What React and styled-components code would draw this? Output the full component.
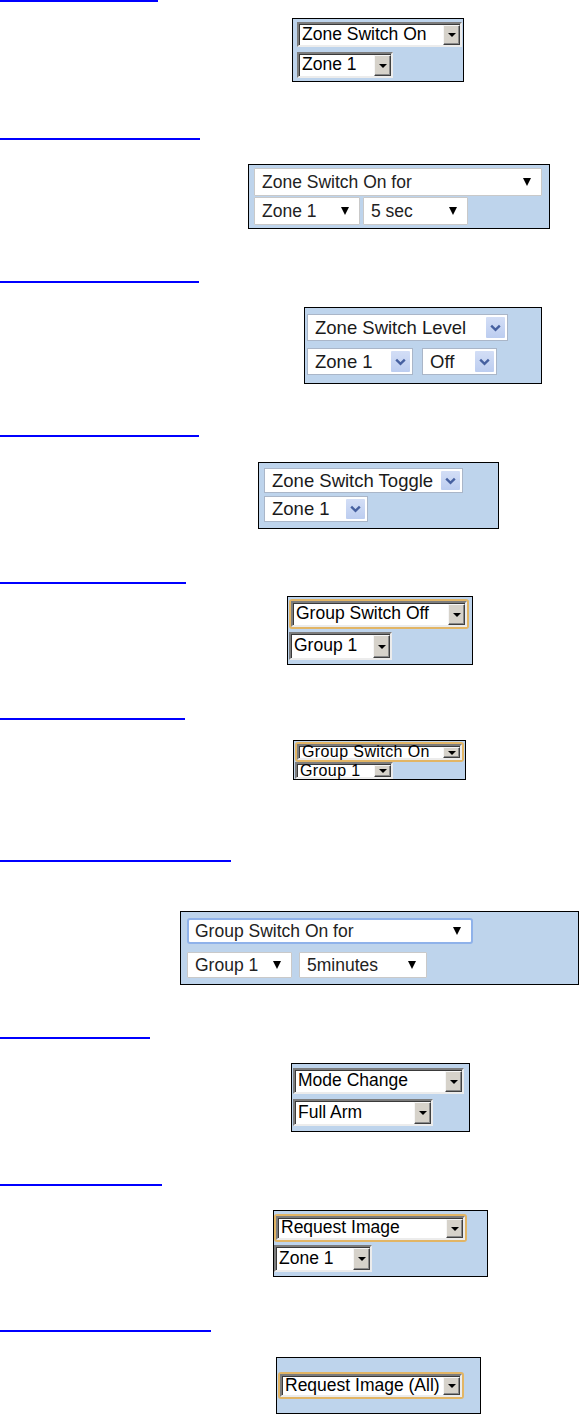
import React from 'react';
import styled, { createGlobalStyle } from 'styled-components';

const GlobalStyle = createGlobalStyle`
  html, body {
    margin: 0;
    padding: 0;
    background: #fff;
  }
  body {
    font-family: "Liberation Sans", Arial, sans-serif;
    width: 579px;
    height: 1414px;
    overflow: hidden;
  }
`;

const sections = [
  {
    rule: 158, ruleY: 0, top: 18, left: 292, w: 172, h: 64, pad: '3px 0 0 4px', gap: 5, kind: 'classic',
    rows: [[{ t: 'Zone Switch On', w: 165, h: 25 }], [{ t: 'Zone 1', w: 96, h: 26 }]],
  },
  {
    rule: 200, ruleY: 138, top: 164, left: 248, w: 302, h: 65, pad: '3px 0 0 5px', gap: 1, colGap: 3, kind: 'flat',
    rows: [[{ t: 'Zone Switch On for', w: 288, h: 28 }], [{ t: 'Zone 1', w: 106, h: 28 }, { t: '5 sec', w: 105, h: 28 }]],
  },
  {
    rule: 199, ruleY: 281, top: 307, left: 304, w: 238, h: 77, pad: '6px 0 0 2px', gap: 7, colGap: 9, kind: 'xp',
    rows: [[{ t: 'Zone Switch Level', w: 201, h: 27 }], [{ t: 'Zone 1', w: 106, h: 27 }, { t: 'Off', w: 75, h: 27 }]],
  },
  {
    rule: 199, ruleY: 435, top: 462, left: 258, w: 241, h: 67, pad: '5px 0 0 5px', gap: 3, kind: 'xp',
    rows: [[{ t: 'Zone Switch Toggle', w: 199, h: 25 }], [{ t: 'Zone 1', w: 104, h: 26 }]],
  },
  {
    rule: 186, ruleY: 582, top: 596, left: 287, w: 186, h: 69, pad: '2px 0 0 1px', gap: 3, kind: 'classic',
    rows: [[{ t: 'Group Switch Off', w: 180, h: 30, ring: 'gold' }], [{ t: 'Group 1', w: 103, h: 28 }]],
  },
  {
    rule: 185, ruleY: 718, top: 740, left: 293, w: 173, h: 40, pad: '1px 0 0 1px', gap: 0, kind: 'classic',
    size: 16, spacing: 0.4,
    rows: [[{ t: 'Group Switch On', w: 169, h: 20, ring: 'gold' }], [{ t: 'Group 1', w: 98, h: 17 }]],
  },
  {
    rule: 231, ruleY: 860, top: 911, left: 180, w: 399, h: 74, pad: '6px 0 0 6px', gap: 8, colGap: 7, kind: 'flat',
    rows: [[{ t: 'Group Switch On for', w: 286, h: 26, ring: 'blue' }], [{ t: 'Group 1', w: 105, h: 26 }, { t: '5minutes', w: 128, h: 26 }]],
  },
  {
    rule: 150, ruleY: 1037, top: 1063, left: 291, w: 179, h: 69, pad: '4px 0 0 1px', gap: 5, kind: 'classic',
    rows: [[{ t: 'Mode Change', w: 171, h: 26 }], [{ t: 'Full Arm', w: 140, h: 27 }]],
  },
  {
    rule: 162, ruleY: 1184, top: 1210, left: 273, w: 215, h: 67, pad: '3px 0 0 0', gap: 3, kind: 'classic',
    rows: [[{ t: 'Request Image', w: 193, h: 28, ring: 'gold' }], [{ t: 'Zone 1', w: 98, h: 27 }]],
  },
  {
    rule: 211, ruleY: 1330, top: 1357, left: 276, w: 205, h: 57, pad: '14px 0 0 1px', gap: 0, kind: 'classic',
    rows: [[{ t: 'Request Image (All)', w: 186, h: 27, ring: 'gold' }]],
  },
];

const ClassicSelect = ({ text, w, h, size, spacing }) => (
  <ClassicField $w={w} $h={h}>
    <ClassicText $size={size} $spacing={spacing}>{text}</ClassicText>
    <ClassicButton>
      <Triangle />
    </ClassicButton>
  </ClassicField>
);

const FlatSelect = ({ text, w, h, focused }) => (
  <FlatField $w={w} $h={h} $focused={focused}>
    <FlatText>{text}</FlatText>
    <FlatArrow />
  </FlatField>
);

const XpSelect = ({ text, w, h }) => (
  <XpField $w={w} $h={h}>
    <XpText>{text}</XpText>
    <XpButton>
      <svg width='11' height='8' viewBox='0 0 11 8'>
        <path d='M1.2 1.6 L5.5 5.8 L9.8 1.6' fill='none' stroke='#4660a0' strokeWidth='2.4' />
      </svg>
    </XpButton>
  </XpField>
);

const Select = ({ kind, item, size, spacing }) => {
  if (kind === 'flat') {
    return <FlatSelect text={item.t} w={item.w} h={item.h} focused={item.ring === 'blue'} />;
  }
  if (kind === 'xp') {
    return <XpSelect text={item.t} w={item.w} h={item.h} />;
  }
  if (item.ring === 'gold') {
    return (
      <GoldRing $w={item.w} $h={item.h}>
        <ClassicSelect text={item.t} w={item.w - 4} h={item.h - 4} size={size} spacing={spacing} />
      </GoldRing>
    );
  }
  return <ClassicSelect text={item.t} w={item.w} h={item.h} size={size} spacing={spacing} />;
};

const App = () => {
  let prevBottom = 0;
  return (
    <Page>
      <GlobalStyle />
      {sections.map((s, i) => {
        const ruleTop = s.ruleY - prevBottom;
        const panelTop = s.top - (s.ruleY + 2);
        prevBottom = s.top + s.h;
        return (
          <Section key={i}>
            <Rule href='#' $w={s.rule} $mt={ruleTop} />
            <Panel $w={s.w} $h={s.h} $mt={panelTop} $left={s.left} $pad={s.pad} $gap={s.gap}>
              {s.rows.map((row, r) => (
                <Row key={r} $gap={s.colGap || 0}>
                  {row.map((item, k) => (
                    <Select key={k} kind={s.kind} item={item} size={s.size} spacing={s.spacing} />
                  ))}
                </Row>
              ))}
            </Panel>
          </Section>
        );
      })}
    </Page>
  );
};

export default App;

const Page = styled.div`
  width: 579px;
  display: flex;
  flex-direction: column;
`;

const Section = styled.section`
  display: flex;
  flex-direction: column;
`;

const Rule = styled.a`
  display: block;
  width: ${(p) => p.$w}px;
  height: 2px;
  margin-top: ${(p) => p.$mt}px;
  background: #0000ff;
`;

const Panel = styled.div`
  box-sizing: border-box;
  width: ${(p) => p.$w}px;
  height: ${(p) => p.$h}px;
  margin: ${(p) => p.$mt}px 0 0 ${(p) => p.$left}px;
  padding: ${(p) => p.$pad};
  background: #bed4ec;
  border: 1px solid #000;
  display: flex;
  flex-direction: column;
  gap: ${(p) => p.$gap}px;
`;

const Row = styled.div`
  display: flex;
  gap: ${(p) => p.$gap}px;
`;

const GoldRing = styled.div`
  box-sizing: border-box;
  width: ${(p) => p.$w}px;
  height: ${(p) => p.$h}px;
  border: 2px solid #e2b565;
  border-radius: 3px;
`;

const ClassicField = styled.div`
  box-sizing: border-box;
  display: flex;
  width: ${(p) => p.$w}px;
  height: ${(p) => p.$h}px;
  background: #fff;
  border: 2px solid;
  border-color: #7c7c7c #ececec #ececec #7c7c7c;
  box-shadow: inset 1px 1px 0 #3a3a3a;
`;

const ClassicText = styled.span`
  flex: 1;
  display: flex;
  align-items: center;
  padding-left: 3px;
  font-size: ${(p) => p.$size || 17.5}px;
  letter-spacing: ${(p) => p.$spacing || 0}px;
  line-height: 1;
  color: #000;
  white-space: nowrap;
`;

const ClassicButton = styled.span`
  box-sizing: border-box;
  flex: 0 0 17px;
  margin: 1px 0 0 0;
  background: #d6d2ca;
  border: 1px solid;
  border-color: #f6f6f6 #404040 #404040 #f6f6f6;
  box-shadow: inset -1px -1px 0 #8a8a8a;
  display: flex;
  align-items: center;
  justify-content: center;
`;

const Triangle = styled.span`
  width: 0;
  height: 0;
  border-left: 4px solid transparent;
  border-right: 4px solid transparent;
  border-top: 4px solid #000;
`;

const FlatField = styled.div`
  box-sizing: border-box;
  display: flex;
  align-items: center;
  width: ${(p) => p.$w}px;
  height: ${(p) => p.$h}px;
  background: #fff;
  border: ${(p) => (p.$focused ? '2px solid #8fb2ea' : '1px solid #c9c9c9')};
  border-radius: ${(p) => (p.$focused ? '3px' : '1px')};
  padding: 0 10px 0 ${(p) => (p.$focused ? 6 : 7)}px;
`;

const FlatText = styled.span`
  flex: 1;
  font-size: 17.5px;
  color: #222;
  white-space: nowrap;
`;

const FlatArrow = styled.span`
  width: 0;
  height: 0;
  border-left: 4px solid transparent;
  border-right: 4px solid transparent;
  border-top: 8px solid #000;
`;

const XpField = styled.div`
  box-sizing: border-box;
  display: flex;
  width: ${(p) => p.$w}px;
  height: ${(p) => p.$h}px;
  background: #fff;
  border: 1px solid #aab6c8;
  padding: 2px;
`;

const XpText = styled.span`
  flex: 1;
  display: flex;
  align-items: center;
  padding-left: 5px;
  font-size: 18.5px;
  color: #1a1a1a;
  white-space: nowrap;
`;

const XpButton = styled.span`
  flex: 0 0 19px;
  background: linear-gradient(#d3def6, #bccdf0);
  border-radius: 1px;
  display: flex;
  align-items: center;
  justify-content: center;
`;
